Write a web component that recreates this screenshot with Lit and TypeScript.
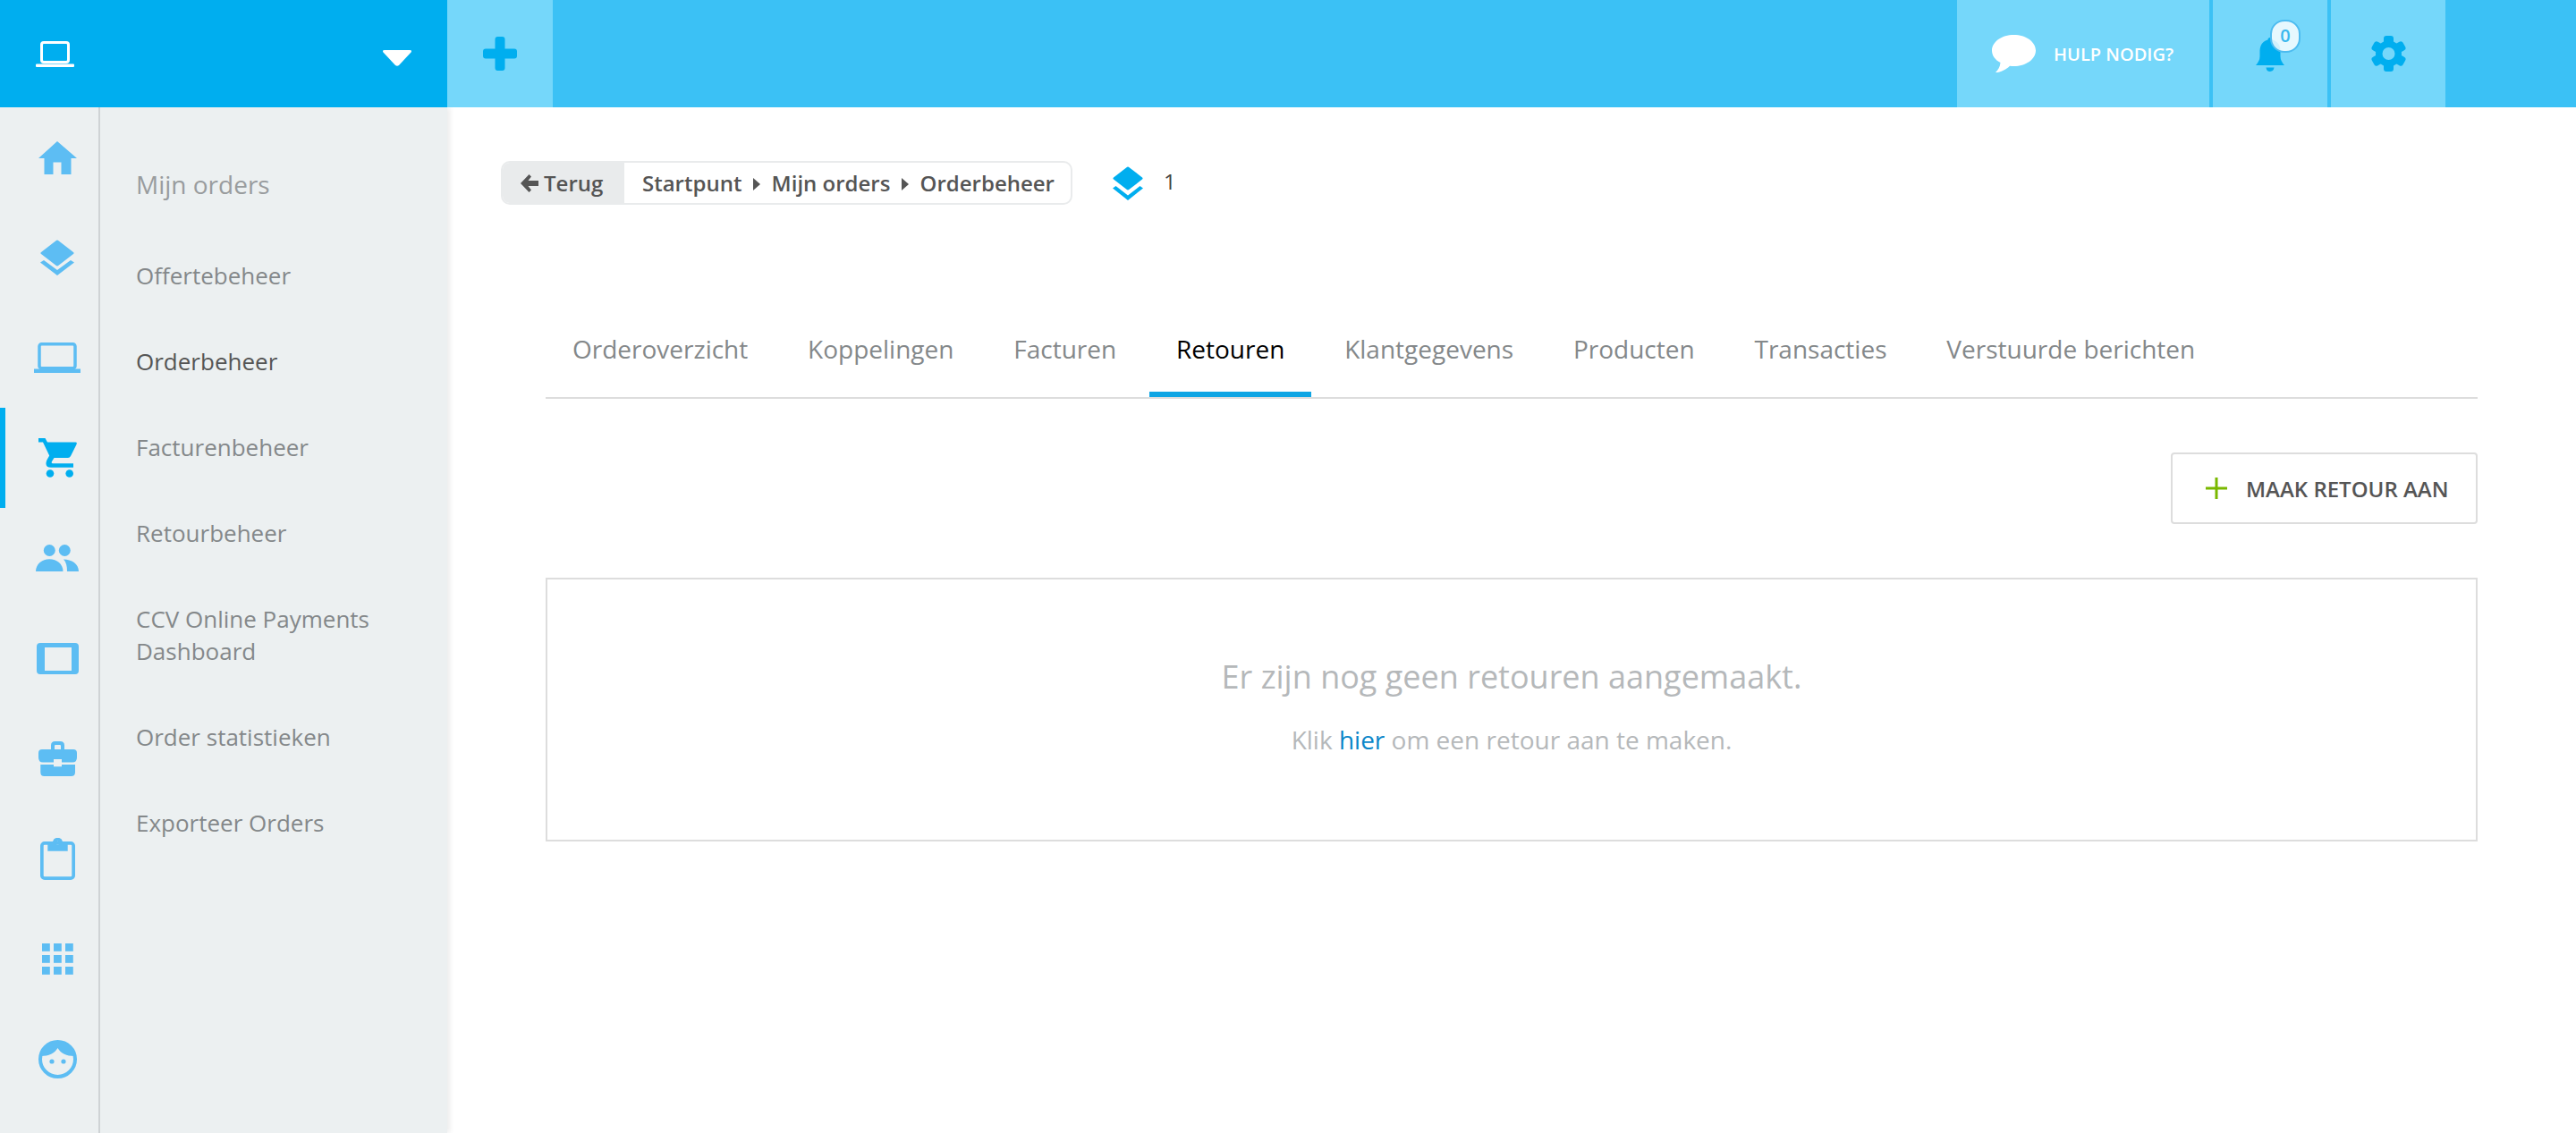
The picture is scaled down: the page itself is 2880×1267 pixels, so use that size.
import { LitElement, css, html, svg } from "lit";
import { customElement } from "lit/decorators.js";

const railIcons = [
  // home
  svg`<svg width="43" height="37" viewBox="0 0 43 37"><path d="M21 0 43 19h-6.500v18H25.500V23.500h-9V37H6.500V19H0z"/></svg>`,
  // layers
  svg`<svg width="38" height="40" viewBox="0 0 38 40"><path d="M17.500 1.200q1.500-1.200 3 0L37 14q1.200 1 0 2L20.500 28.800q-1.500 1.200-3 0L1 16q-1.200-1 0-2z"/><path d="M0 25.500 4 23l15 11 15-11 4 2.500L19 40z"/></svg>`,
  // laptop
  svg`<svg width="52" height="34" viewBox="0 0 52 34"><rect x="6" y="1.750" width="40" height="27" rx="2.500" fill="none" stroke="currentColor" stroke-width="3.500"/><path d="M0 29.500h52V34H0z"/></svg>`,
  // cart
  svg`<svg width="43" height="44" viewBox="0 0 43 44"><path d="M0 0h7.500l2.500 4.500h31.500q2 0 1 2.500L36 20q-1 2-3 2H17.500l-2.500 4q-1 2.300 1 2.300H39v4.400H14q-6 0-5.500-5 .2-2 1-3.500l2.700-4.700L5 4.500H0z"/><circle cx="13" cy="39.500" r="4.300"/><circle cx="34.700" cy="39.500" r="4.300"/></svg>`,
  // people
  svg`<svg width="48" height="30" viewBox="0 0 48 30"><circle cx="15.300" cy="6.500" r="6.500"/><circle cx="32.300" cy="6.500" r="6.500"/><path d="M0 30c0-8 7-13.700 15.300-13.700S30.500 22 30.500 30z"/><path d="M31 16.500c9 0 17 5 17 13.500H35c0-6-1-10.500-4-13.500z"/></svg>`,
  // tablet
  svg`<svg width="47" height="35" viewBox="0 0 47 35"><path fill-rule="evenodd" d="M4 0h39q4 0 4 4v27q0 4-4 4H4q-4 0-4-4V4q0-4 4-4zm5 5v26h30V5z"/></svg>`,
  // briefcase
  svg`<svg width="43" height="39" viewBox="0 0 43 39"><path fill-rule="evenodd" d="M14 9V4.500Q14 0 18.500 0h6Q29 0 29 4.500V9h10q4 0 4 4v5q0 5.500-5 5.500H26V20h-9v3.500H5q-5 0-5-5.500v-5q0-4 4-4zm4 0h7V5q0-1-1-1h-5q-1 0-1 1z"/><path d="M2.300 26H17v2.300h9V26h15v8.500q0 4.500-4.500 4.500h-30q-4.200 0-4.200-4.500z"/></svg>`,
  // clipboard
  svg`<svg width="39" height="47" viewBox="0 0 39 47"><rect x="1.850" y="5.850" width="35.300" height="39.300" rx="3" fill="none" stroke="currentColor" stroke-width="3.700"/><path fill-rule="evenodd" d="M8.300 4h5.700a5.700 5.700 0 0 1 11 0h5.700v10.700H8.300zM19.500 3.700a2 2 0 1 0 0 4 2 2 0 0 0 0-4z"/></svg>`,
  // grid
  svg`<svg width="35" height="35" viewBox="0 0 35 35">${[0, 13, 26].map((y) =>
    [0, 13, 26].map((x) => svg`<rect x=${x} y=${y} width="8.800" height="8.800"/>`)
  )}</svg>`,
  // face
  svg`<svg width="43" height="43" viewBox="0 0 43 43"><circle cx="21.500" cy="21.500" r="19.500" fill="none" stroke="currentColor" stroke-width="4"/><path d="M3 18C4 8 12 2 21.500 2S39 8 40 18c-8.500 0-15-3-18.500-9C18 15 11.500 18 3 18z"/><circle cx="15" cy="24" r="2.600"/><circle cx="28" cy="24" r="2.600"/></svg>`,
];

const panelLinks = [
  "Offertebeheer",
  "Orderbeheer",
  "Facturenbeheer",
  "Retourbeheer",
  "CCV Online Payments Dashboard",
  "Order statistieken",
  "Exporteer Orders",
];

const tabs = [
  "Orderoverzicht",
  "Koppelingen",
  "Facturen",
  "Retouren",
  "Klantgegevens",
  "Producten",
  "Transacties",
  "Verstuurde berichten",
];

@customElement("app-root")
export class AppRoot extends LitElement {
  render() {
    return html`
      <header class="topbar">
        <div class="shop">
          <svg width="43" height="29" viewBox="0 0 43 29" fill="#fff">
            <rect x="6.500" y="1.500" width="30" height="22" rx="2.500" fill="none" stroke="#fff" stroke-width="3"/>
            <path d="M1 25.500h41a1 1 0 0 1 1 1V28a1 1 0 0 1-1 1H1a1 1 0 0 1-1-1v-1.500a1 1 0 0 1 1-1z"/>
          </svg>
          <svg class="caret" width="32" height="18" viewBox="0 0 32 18">
            <path d="M2 0h28q3 0 1.500 2.500L18 17q-2 1.500-4 0L.5 2.500Q-1 0 2 0z" fill="#fff"/>
          </svg>
        </div>
        <div class="add">
          <svg width="38" height="38" viewBox="0 0 38 38">
            <path d="M13.500 3q0-3 3-3h5q3 0 3 3v10.500H35q3 0 3 3v5q0 3-3 3H24.500V35q0 3-3 3h-5q-3 0-3-3V24.500H3q-3 0-3-3v-5q0-3 3-3h10.500z" fill="#00aeef"/>
          </svg>
        </div>
        <div class="tools">
          <div class="tool help">
            <svg width="49" height="42" viewBox="0 0 49 42">
              <path d="M24.500 0C38 0 49 7.800 49 17.500S38 35 24.500 35c-1.500 0-3 0-4.500-.300C16 38.500 10 42 4 42c3-3 5-6 5.500-11C3.500 28 0 23 0 17.500 0 7.800 11 0 24.500 0z" fill="#fff"/>
            </svg>
            <span>HULP NODIG?</span>
          </div>
          <div class="tool bell">
            <svg width="32" height="38" viewBox="0 0 32 38">
              <path d="M16 0c1.500 0 2.500 1 2.500 2.500C24.500 4 27.500 9 27.500 15v6q0 5 4.500 10H0q4.500-5 4.500-10v-6c0-6 3-11 9-12.500C13.500 1 14.500 0 16 0z" fill="#00aeef"/>
              <path d="M11.500 33.500h9Q20 38 16 38t-4.500-4.500z" fill="#00aeef"/>
            </svg>
            <span class="badge">0</span>
          </div>
          <div class="tool">
            <svg width="39" height="40" viewBox="0 0 39 40" fill="#00aeef">
              <circle cx="19.500" cy="20" r="14.500"/>
              <rect x="14" y="0" width="11" height="40" rx="3"/>
              <rect x="14" y="0" width="11" height="40" rx="3" transform="rotate(60 19.500 20)"/>
              <rect x="14" y="0" width="11" height="40" rx="3" transform="rotate(120 19.500 20)"/>
              <circle cx="19.500" cy="20" r="7" fill="#75d7fa"/>
            </svg>
          </div>
        </div>
      </header>

      <div class="body">
        <aside class="side">
          <nav class="rail">
            ${railIcons.map(
              (icon, i) => html`<a class="rail-item ${i === 3 ? "active" : ""}">${icon}</a>`
            )}
          </nav>
          <nav class="panel">
            <div class="panel-title">Mijn orders</div>
            ${panelLinks.map(
              (name) => html`<a class="panel-link ${name === "Orderbeheer" ? "current" : ""}">${name}</a>`
            )}
          </nav>
        </aside>

        <main class="main">
          <div class="crumb-row">
            <div class="crumbs">
              <a class="back">
                <svg width="20" height="20" viewBox="0 0 20 20">
                  <path d="M9.500 0 12 2.500 8.500 7H20v6H8.500L12 17.500 9.500 20 0 10z" fill="#555"/>
                </svg>
                Terug
              </a>
              <div class="trail">
                <span>Startpunt</span><i class="sep"></i><span>Mijn orders</span><i class="sep"></i><span>Orderbeheer</span>
              </div>
            </div>
            <svg class="stack" width="34" height="38" viewBox="0 0 34 38">
              <path d="M15.500 1.200q1.500-1.200 3 0L33 12.500q1.200 1 0 2L18.500 25.800q-1.500 1.200-3 0L1 14.500q-1.200-1 0-2z" fill="#00aeef"/>
              <path d="M0 24.500 3.500 22 17 32.500 30.500 22l3.500 2.500L17 38z" fill="#00aeef"/>
            </svg>
            <span class="count">1</span>
          </div>

          <div class="content">
            <div class="tabs">
              ${tabs.map((t) => html`<a class="tab ${t === "Retouren" ? "on" : ""}">${t}</a>`)}
            </div>
            <div class="actions">
              <a class="btn">
                <svg width="24" height="24" viewBox="0 0 24 24"><path d="M10.500 0h3v10.500H24v3H13.500V24h-3V13.500H0v-3h10.500z" fill="#7ab800"/></svg>
                MAAK RETOUR AAN
              </a>
            </div>
            <div class="empty">
              <h2>Er zijn nog geen retouren aangemaakt.</h2>
              <p>Klik <a>hier</a> om een retour aan te maken.</p>
            </div>
          </div>
        </main>
      </div>
    `;
  }

  static styles = css`
    :host {
      display: flex;
      flex-direction: column;
      height: 100vh;
      overflow: hidden;
      background: #fff;
      font-family: "Open Sans", "Noto Sans", sans-serif;
    }
    svg {
      display: block;
      flex: none;
    }

    .topbar {
      position: relative;
      z-index: 1;
      display: flex;
      flex: none;
      height: 120px;
      background: #3bc1f5;
    }
    .shop {
      display: flex;
      align-items: center;
      justify-content: space-between;
      width: 500px;
      box-sizing: border-box;
      padding: 0 40px;
      background: #00aeef;
    }
    .caret {
      margin-top: 10px;
    }
    .add {
      display: flex;
      align-items: center;
      justify-content: center;
      width: 118px;
      background: #75d7fa;
    }
    .tools {
      display: flex;
      gap: 4px;
      margin-left: auto;
      margin-right: 146px;
    }
    .tool {
      display: flex;
      align-items: center;
      justify-content: center;
      width: 128px;
      background: #75d7fa;
    }
    .help {
      width: 282px;
      justify-content: flex-start;
      box-sizing: border-box;
      padding-left: 39px;
      gap: 20px;
      color: #fff;
      font-size: 20px;
      font-weight: 600;
    }
    .bell {
      position: relative;
    }
    .bell svg {
      margin-top: 2px;
    }
    .badge {
      position: absolute;
      left: 64px;
      top: 22px;
      box-sizing: border-box;
      width: 34px;
      height: 37px;
      border: 2px solid #4dbcf0;
      border-radius: 16px;
      background: rgba(255, 255, 255, 0.82);
      color: #3bb8ee;
      font-size: 20px;
      font-weight: 600;
      line-height: 32px;
      text-align: center;
    }

    .body {
      display: flex;
      flex: 1;
      min-height: 0;
    }
    .side {
      display: flex;
      flex: none;
      width: 500px;
      background: #ecf0f1;
      box-shadow: 3px 0 6px rgba(0, 0, 0, 0.08);
    }
    .rail {
      display: flex;
      flex-direction: column;
      width: 110px;
      border-right: 2px solid #cfd3d5;
    }
    .rail-item {
      display: flex;
      align-items: center;
      justify-content: center;
      height: 112px;
      padding-left: 18px;
      color: #5dbdf3;
      fill: #5dbdf3;
    }
    .rail-item.active {
      color: #00aeef;
      fill: #00aeef;
      box-shadow: inset 6px 0 0 #00aeef;
    }
    .panel {
      display: flex;
      flex-direction: column;
      flex: 1;
      padding: 66px 30px 0 40px;
      gap: 60px;
    }
    .panel-title {
      margin-bottom: 4px;
      color: #999c9e;
      font-size: 28px;
      line-height: 40px;
    }
    .panel-link {
      color: #84888a;
      font-size: 26px;
      line-height: 36px;
    }
    .panel-link.current {
      color: #555;
    }

    .main {
      flex: 1;
      min-width: 0;
      padding: 60px 112px 0 60px;
    }
    .crumb-row {
      display: flex;
      align-items: center;
      height: 49px;
      color: #555;
    }
    .crumbs {
      display: flex;
      box-sizing: border-box;
      width: 639px;
      height: 49px;
      overflow: hidden;
      border: 2px solid #e9ebec;
      border-radius: 10px;
      font-size: 24px;
      font-weight: 600;
      line-height: 44px;
      white-space: nowrap;
    }
    .back {
      display: flex;
      align-items: center;
      gap: 6px;
      width: 136px;
      box-sizing: border-box;
      padding-left: 20px;
      background: #e9ebec;
    }
    .trail {
      display: flex;
      align-items: center;
      padding-left: 20px;
    }
    .sep {
      width: 0;
      height: 0;
      margin: 3px 12.600px 0;
      border-left: 8px solid #555;
      border-top: 7px solid transparent;
      border-bottom: 7px solid transparent;
    }
    .stack {
      margin-left: 45px;
    }
    .count {
      margin-left: 23px;
      margin-top: -4px;
      color: #444;
      font-size: 24px;
    }

    .content {
      margin: 142px -2px 0 50px;
    }
    .tabs {
      display: flex;
      gap: 6.800px;
      border-bottom: 2px solid #ddd;
    }
    .tab {
      padding: 0 30px 29px;
      border-bottom: 6px solid transparent;
      color: #84888a;
      font-size: 28px;
      line-height: 38px;
    }
    .tab.on {
      border-bottom-color: #0ea5e4;
      color: #000;
    }
    .actions {
      display: flex;
      justify-content: flex-end;
      margin-top: 60px;
    }
    .btn {
      display: flex;
      align-items: center;
      gap: 21px;
      box-sizing: border-box;
      width: 343px;
      height: 80px;
      padding-left: 37px;
      border: 2px solid #ddd;
      border-radius: 4px;
      color: #555;
      font-size: 24px;
      font-weight: 600;
    }
    .empty {
      display: flex;
      flex-direction: column;
      align-items: center;
      box-sizing: border-box;
      height: 295px;
      margin-top: 60px;
      padding-top: 84px;
      border: 2px solid #ddd;
      color: #b5b8ba;
    }
    .empty h2 {
      margin: 0;
      font-size: 36px;
      font-weight: 400;
      line-height: 50px;
    }
    .empty p {
      margin: 25px 0 0;
      font-size: 28px;
      line-height: 40px;
    }
    .empty a {
      color: #0a86c9;
    }
  `;
}
